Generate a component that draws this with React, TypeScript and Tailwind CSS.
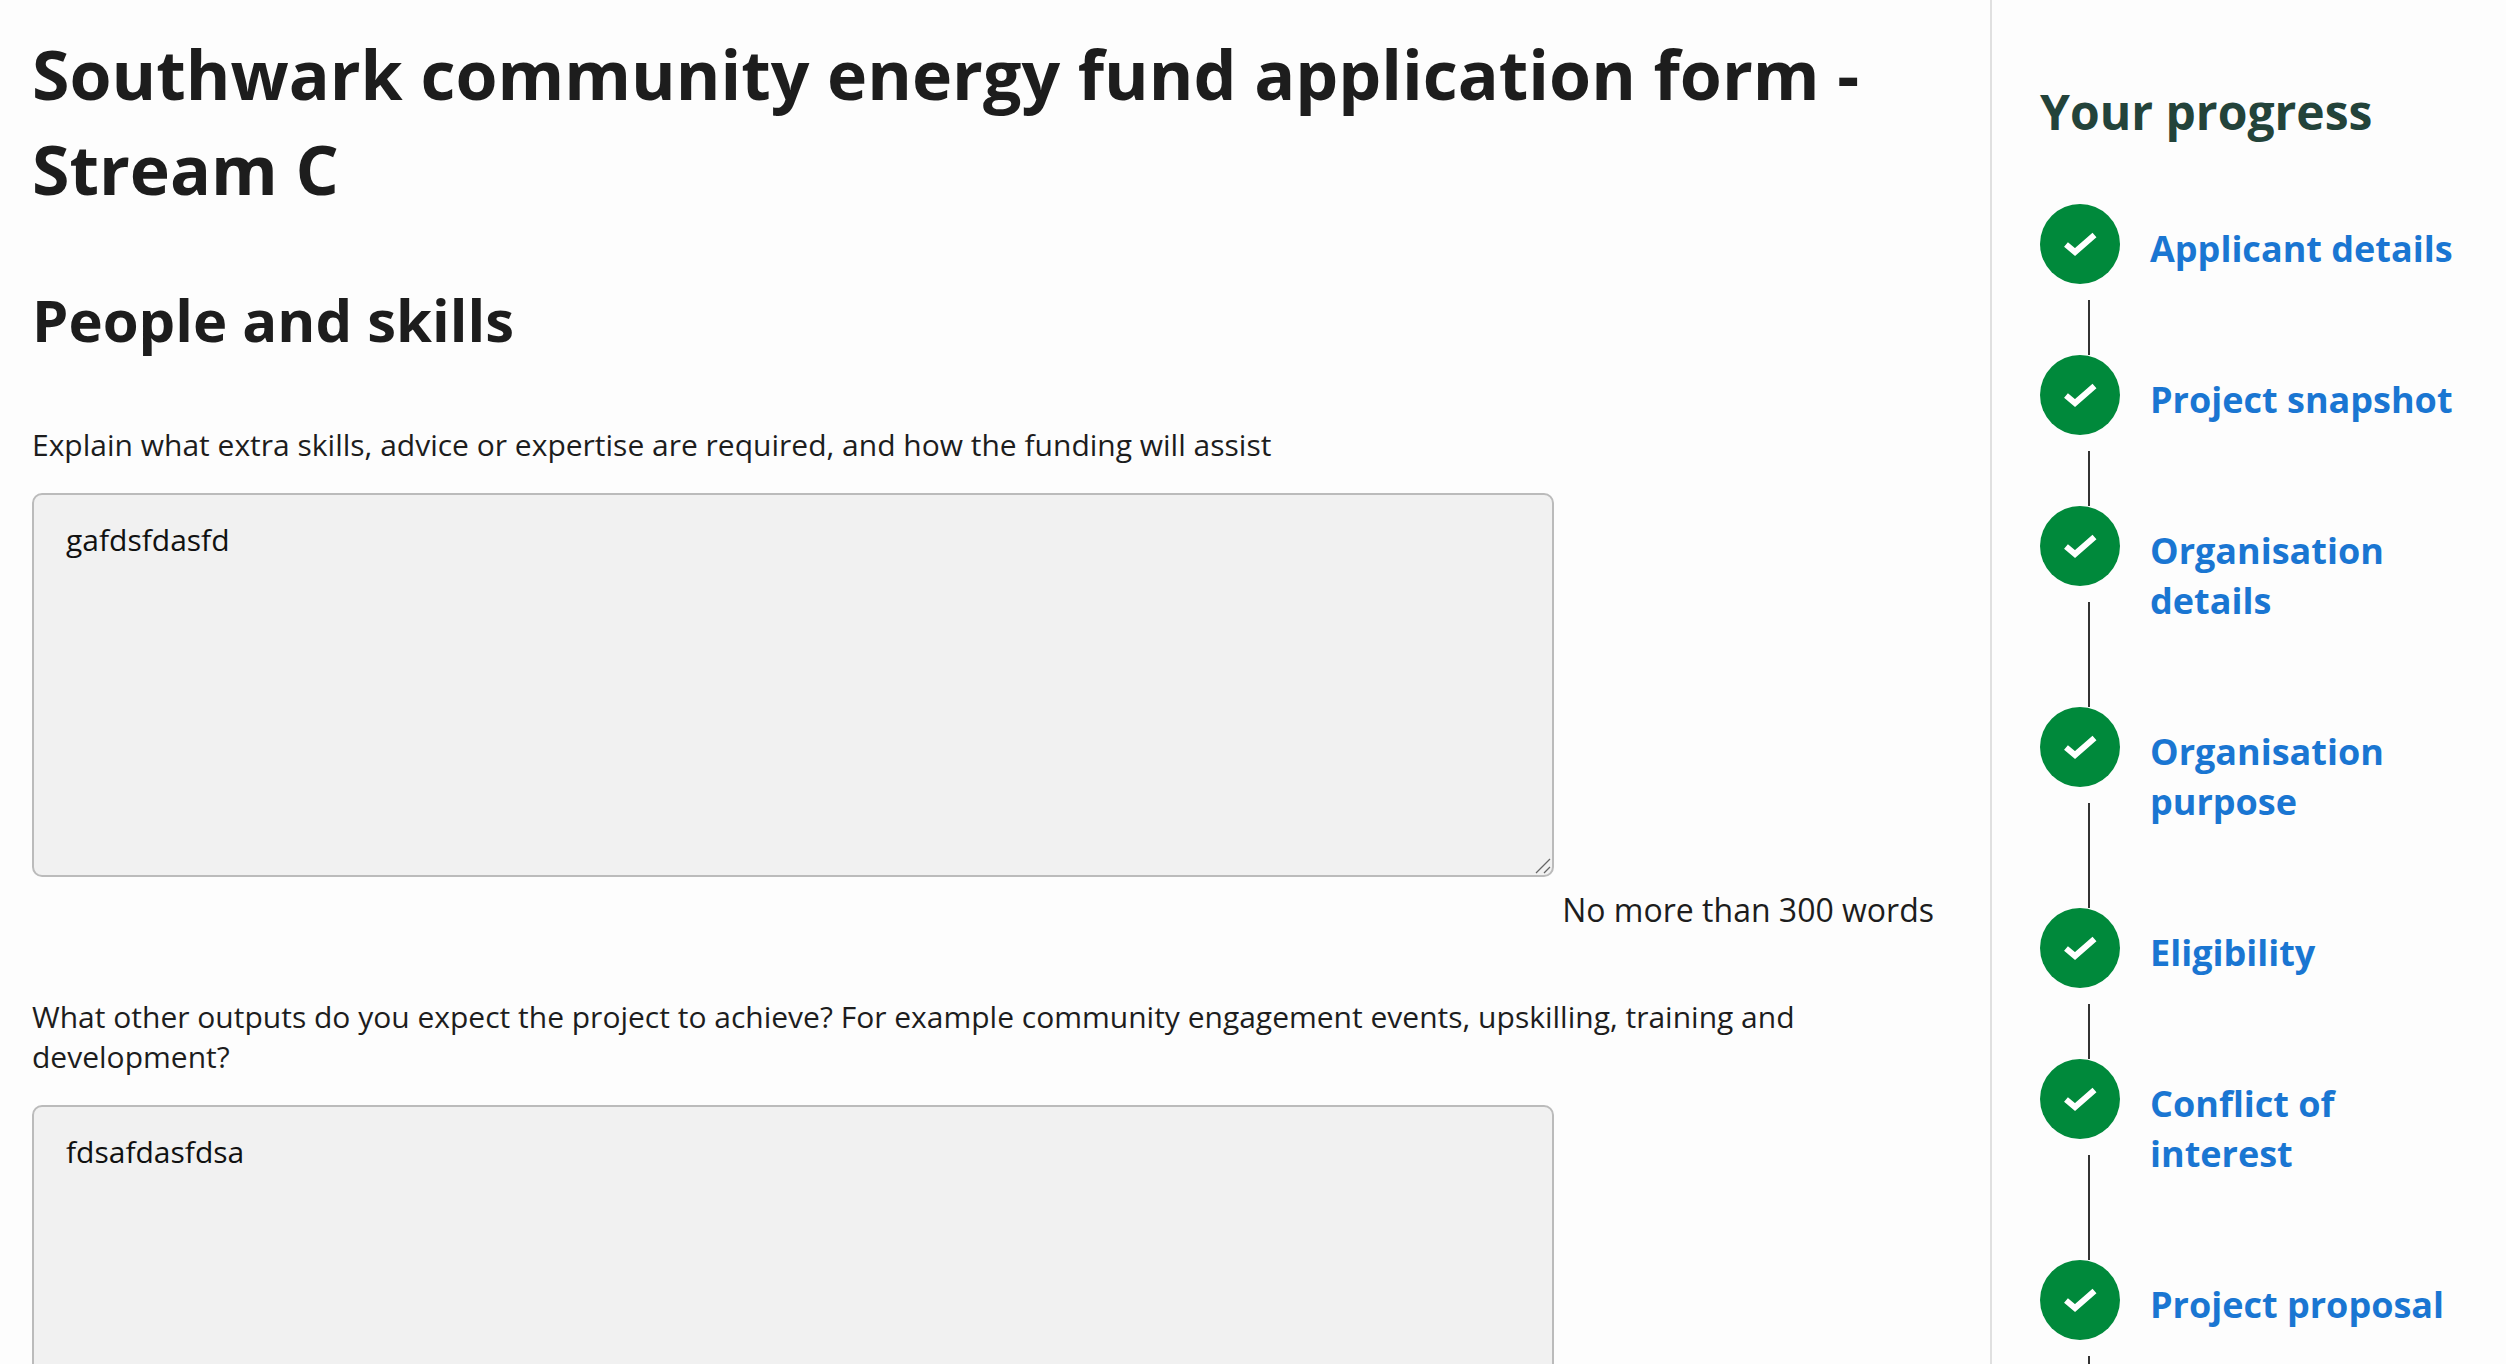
import { useState } from "react";

type Question = {
  id: string;
  label: string;
  answer: string;
  hint?: string;
};

const questions: Question[] = [
  {
    id: "extra-skills",
    label:
      "Explain what extra skills, advice or expertise are required, and how the funding will assist",
    answer: "gafdsfdasfd",
    hint: "No more than 300 words",
  },
  {
    id: "other-outputs",
    label:
      "What other outputs do you expect the project to achieve? For example community engagement events, upskilling, training and development?",
    answer: "fdsafdasfdsa",
  },
];

const steps = [
  "Applicant details",
  "Project snapshot",
  "Organisation details",
  "Organisation purpose",
  "Eligibility",
  "Conflict of interest",
  "Project proposal",
];

const App = () => {
  return (
    <div className="flex h-screen overflow-hidden bg-[#fdfdfd] font-['Open_Sans',sans-serif] text-[#1d1d1d]">
      <main className="min-w-0 flex-1 pt-[26px] pr-14 pl-8">
        <h1 className="text-[68px] leading-[95px] font-bold">
          Southwark community energy fund application form - Stream C
        </h1>
        <h2 className="mt-16 text-[58px] leading-[80px] font-bold">
          People and skills
        </h2>

        <form>
          {questions.map((question) => (
            <QuestionField key={question.id} question={question} />
          ))}
        </form>
      </main>

      <aside className="w-[516px] shrink-0 border-l-2 border-[#e0e0e0] px-12 pt-[79px]">
        <h2 className="text-[48px] leading-[66px] font-bold text-[#23433a]">
          Your progress
        </h2>
        <ol className="mt-[59px]">
          {steps.map((step) => (
            <ProgressStep key={step} title={step} />
          ))}
        </ol>
      </aside>
    </div>
  );
};

const QuestionField = ({ question }: { question: Question }) => {
  const [value, setValue] = useState(question.answer);

  return (
    <div className="mt-[65px]">
      <label htmlFor={question.id} className="block text-[30px] leading-[40px]">
        {question.label}
      </label>
      <div className="relative mt-7 w-4/5">
        <textarea
          id={question.id}
          value={value}
          onChange={(e) => setValue(e.target.value)}
          className="block h-96 w-full resize-none rounded-[10px] border-2 border-[#bbbbbb] bg-[#f1f1f1] px-8 py-[25px] text-[30px] leading-[40px] text-[#111111]"
        />
        {/* Resize grip */}
        <svg
          className="pointer-events-none absolute right-[3px] bottom-[3px] h-4 w-4"
          viewBox="0 0 16 16"
          fill="none"
          stroke="#666666"
          strokeWidth="1.3"
        >
          <path d="M1 15L15 1M9 15L15 9" />
        </svg>
      </div>
      {question.hint && (
        <p className="mt-[11px] text-right text-[32px] leading-[44px]">
          {question.hint}
        </p>
      )}
    </div>
  );
};

const ProgressStep = ({ title }: { title: string }) => {
  return (
    <li className="flex">
      <div className="flex w-20 shrink-0 flex-col">
        <span className="flex h-20 w-20 items-center justify-center rounded-full bg-[#00893b]">
          <svg
            className="h-10 w-10"
            viewBox="0 0 40 40"
            fill="none"
            stroke="#ffffff"
            strokeWidth="6"
          >
            <path d="M6 20.5L15 28L34.5 11" />
          </svg>
        </span>
        {/* Connector down to the next step */}
        <span className="mt-4 ml-12 w-[2px] flex-1 bg-[#333333]"></span>
      </div>
      <a
        href="#"
        className="ml-[30px] pt-5 pb-[81px] text-[36px] leading-[50px] font-bold text-[#1a76d2]"
      >
        {title}
      </a>
    </li>
  );
};

export default App;
